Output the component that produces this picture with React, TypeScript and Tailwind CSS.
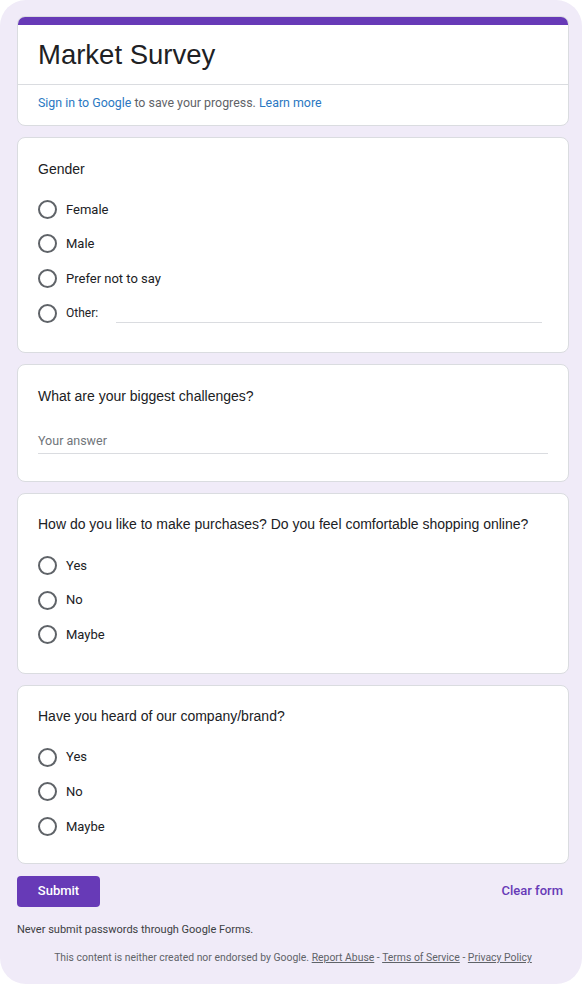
import React from 'react';

const font = { fontFamily: 'Roboto, "Liberation Sans", Arial, sans-serif' };

function Radio({ label }: { label: string }) {
  return (
    <div className="flex items-center h-[34.6px]">
      <span className="w-[19px] h-[19px] rounded-full border-2 border-[#5f6368] shrink-0" />
      <span className="ml-[9px] text-[13px] text-[#202124]">{label}</span>
    </div>
  );
}

function Card({ children, className = '' }: { children: React.ReactNode; className?: string }) {
  return (
    <div className={`bg-white border border-[#dadce0] rounded-[8px] ${className}`}>{children}</div>
  );
}

function Question({ title }: { title: string }) {
  return (
    <div className="text-[14px] leading-5 text-[#202124] font-['Liberation_Sans',Arial,sans-serif]">{title}</div>
  );
}

export default function App() {
  return (
    <div className="bg-white w-[582px] h-[984px]" style={font}>
      <div className="w-full h-full bg-[#f0ebf8] rounded-[26px] pt-4 pl-[17px] pr-[13px] flex flex-col">
        {/* Header */}
        <div className="bg-white border border-[#dadce0] rounded-[8px] overflow-hidden">
          <div className="h-[9px] bg-[#673ab7] -mx-px -mt-px" />
          <div className="px-5 pt-[12px] pb-[11px] border-b border-[#dadce0]">
            <h1 className="text-[27.5px] leading-9 text-[#202124] font-['Liberation_Sans',Arial,sans-serif]">Market Survey</h1>
          </div>
          <div className="px-5 pt-[10px] pb-[14px] text-[12.4px] leading-4 text-[#5f6368]">
            <span className="text-[#2b78c2]">Sign in to Google</span> to save your progress.{' '}
            <span className="text-[#2b78c2]">Learn more</span>
          </div>
        </div>

        {/* Gender */}
        <Card className="mt-[11px] px-5 pt-[21px] pb-[22px]">
          <Question title="Gender" />
          <div className="mt-[13px]">
            <Radio label="Female" />
            <Radio label="Male" />
            <Radio label="Prefer not to say" />
            <div className="flex items-center h-[34.6px]">
              <span className="w-[19px] h-[19px] rounded-full border-2 border-[#5f6368] shrink-0" />
              <span className="ml-[9px] text-[12px] text-[#202124]">Other:</span>
              <div className="ml-[18px] flex-1 mr-[6px] self-end mb-[7px] border-b border-[#dadce0]" />
            </div>
          </div>
        </Card>

        {/* Challenges */}
        <Card className="mt-[11px] px-5 pt-[21px] pb-[27px]">
          <Question title="What are your biggest challenges?" />
          <div className="mt-[26px] pb-[2px] border-b border-[#dadce0] text-[12.5px] text-[#70757a]">Your answer</div>
        </Card>

        {/* Purchases */}
        <Card className="mt-[11px] px-5 pt-[20px] pb-[21px]">
          <Question title="How do you like to make purchases? Do you feel comfortable shopping online?" />
          <div className="mt-[14px]">
            <Radio label="Yes" />
            <Radio label="No" />
            <Radio label="Maybe" />
          </div>
        </Card>

        {/* Brand */}
        <Card className="mt-[11px] px-5 pt-[20px] pb-[19px]">
          <Question title="Have you heard of our company/brand?" />
          <div className="mt-[14px]">
            <Radio label="Yes" />
            <Radio label="No" />
            <Radio label="Maybe" />
          </div>
        </Card>

        {/* Actions */}
        <div className="mt-3 flex items-center justify-between">
          <button className="w-[83px] h-[31px] rounded-[4px] bg-[#673ab7] text-white text-[13px] font-medium">Submit</button>
          <span className="mr-[6px] text-[13px] font-medium text-[#673ab7]">Clear form</span>
        </div>

        <div className="mt-[15px] text-[11px] text-[#3c4043]">Never submit passwords through Google Forms.</div>
        <div className="mt-[12px] text-center text-[10.4px] text-[#5f6368]">
          This content is neither created nor endorsed by Google. <span className="underline">Report Abuse</span> -{' '}
          <span className="underline">Terms of Service</span> - <span className="underline">Privacy Policy</span>
        </div>
      </div>
    </div>
  );
}
